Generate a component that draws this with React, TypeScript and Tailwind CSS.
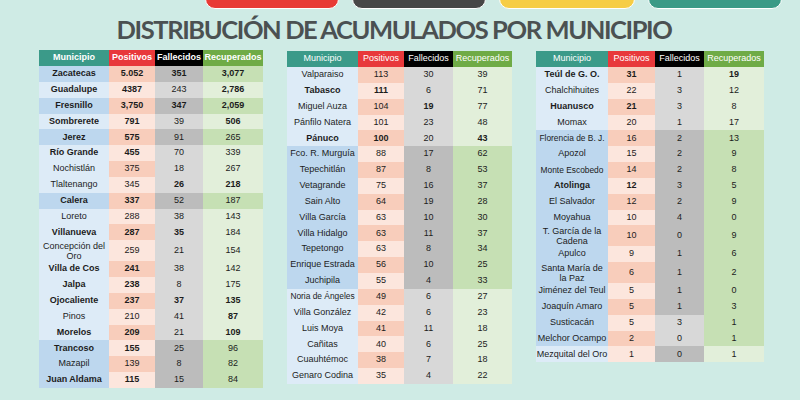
type Row = [string, string, string, string, string, string, number?];
// bold mask (municipio, positivos, fallecidos, recuperados), dark mask (municipio, fallecidos, recuperados)
// last value: 1 = two lines, 2 = smaller text

const tabla1: Row[] = [
  ['Zacatecas', '5.052', '351', '3,077', '1111', '111'],
  ['Guadalupe', '4387', '243', '2,786', '1101', '000'],
  ['Fresnillo', '3,750', '347', '2,059', '1111', '111'],
  ['Sombrerete', '791', '39', '506', '1101', '000'],
  ['Jerez', '575', '91', '265', '1100', '111'],
  ['Río Grande', '455', '70', '339', '1100', '000'],
  ['Nochistlán', '375', '18', '267', '0000', '000'],
  ['Tlaltenango', '345', '26', '218', '0011', '000'],
  ['Calera', '337', '52', '187', '1100', '111'],
  ['Loreto', '288', '38', '143', '0000', '000'],
  ['Villanueva', '287', '35', '184', '1110', '000'],
  ['Concepción del Oro', '259', '21', '154', '0000', '000', 1],
  ['Villa de Cos', '241', '38', '142', '1100', '000'],
  ['Jalpa', '238', '8', '175', '1100', '000'],
  ['Ojocaliente', '237', '37', '135', '1111', '000'],
  ['Pinos', '210', '41', '87', '0001', '000'],
  ['Morelos', '209', '21', '109', '1101', '000'],
  ['Trancoso', '155', '25', '96', '1100', '111'],
  ['Mazapil', '139', '8', '82', '0000', '111'],
  ['Juan Aldama', '115', '15', '84', '1100', '111'],
];

const tabla2: Row[] = [
  ['Valparaiso', '113', '30', '39', '0000', '000'],
  ['Tabasco', '111', '6', '71', '1100', '000'],
  ['Miguel Auza', '104', '19', '77', '0010', '000'],
  ['Pánfilo Natera', '101', '23', '48', '0000', '000'],
  ['Pánuco', '100', '20', '43', '1101', '000'],
  ['Fco. R. Murguía', '88', '17', '62', '0000', '111'],
  ['Tepechitlán', '87', '8', '53', '0000', '111'],
  ['Vetagrande', '75', '16', '37', '0000', '111'],
  ['Sain Alto', '64', '19', '28', '0000', '111'],
  ['Villa García', '63', '10', '30', '0000', '111'],
  ['Villa Hidalgo', '63', '11', '37', '0000', '111'],
  ['Tepetongo', '63', '8', '34', '0000', '111'],
  ['Enrique Estrada', '56', '10', '25', '0000', '111'],
  ['Juchipila', '55', '4', '33', '0000', '111'],
  ['Noria de Ángeles', '49', '6', '27', '0000', '000', 2],
  ['Villa González', '42', '6', '23', '0000', '000'],
  ['Luis Moya', '41', '11', '18', '0000', '000'],
  ['Cañitas', '40', '6', '25', '0000', '000'],
  ['Cuauhtémoc', '38', '7', '18', '0000', '000'],
  ['Genaro Codina', '35', '4', '22', '0000', '000'],
];

const tabla3: Row[] = [
  ['Teúl de G. O.', '31', '1', '19', '1101', '000'],
  ['Chalchihuites', '22', '3', '12', '0000', '000'],
  ['Huanusco', '21', '3', '8', '1100', '000'],
  ['Momax', '20', '1', '17', '0000', '000'],
  ['Florencia de B. J.', '16', '2', '13', '0000', '111', 2],
  ['Apozol', '15', '2', '9', '0000', '111'],
  ['Monte Escobedo', '14', '2', '8', '0000', '111', 2],
  ['Atolinga', '12', '3', '5', '1100', '111'],
  ['El Salvador', '12', '2', '9', '0000', '111'],
  ['Moyahua', '10', '4', '0', '0000', '111'],
  ['T. García de la Cadena', '10', '0', '9', '0000', '111', 1],
  ['Apulco', '9', '1', '6', '0000', '111'],
  ['Santa María de la Paz', '6', '1', '2', '0000', '111', 1],
  ['Jiménez del Teul', '5', '1', '0', '0000', '111'],
  ['Joaquín Amaro', '5', '1', '3', '0000', '111'],
  ['Susticacán', '5', '3', '1', '0000', '101'],
  ['Melchor Ocampo', '2', '0', '1', '0000', '101'],
  ['Mezquital del Oro', '1', '0', '1', '0000', '010'],
];

function Tabla({ rows, cols, boldHeader, className }: { rows: Row[]; cols: string; boldHeader?: boolean; className?: string }) {
  const head = 'h-[16px] flex items-center justify-center text-white text-[9px] whitespace-nowrap ' + (boldHeader ? 'font-bold' : '');
  return (
    <div className={'grid ' + cols + ' ' + (className ?? '')}>
      <div className={head + ' bg-[#3b9a89]'}>Municipio</div>
      <div className={head + ' bg-[#e8383b]'}>Positivos</div>
      <div className={head + ' bg-black'}>Fallecidos</div>
      <div className={head + ' bg-[#6fab46]'}>Recuperados</div>
      {rows.map(([m, p, f, r, b, d, extra], i) => {
        const h = extra === 1 ? 'h-[20.85px]' : 'h-[15.85px]';
        const cell = h + ' flex items-center justify-center text-center text-[#1c1c1c] ';
        const w = (k: number) => (b[k] === '1' ? 'font-bold ' : '');
        return [
          <div
            key={i + 'm'}
            className={cell + w(0) + (extra === 1 ? 'leading-[10px] px-[2px] ' : '') + (extra === 2 ? 'text-[8.4px] ' : 'text-[9px] ') + (d[0] === '1' ? 'bg-[#bdd7ee]' : 'bg-[#ddebf7]')}
          >
            {m}
          </div>,
          <div key={i + 'p'} className={cell + w(1) + 'text-[9px] ' + (i % 2 === 0 ? 'bg-[#f8cdbb]' : 'bg-[#fce6dd]')}>
            {p}
          </div>,
          <div key={i + 'f'} className={cell + w(2) + 'text-[9px] ' + (d[1] === '1' ? 'bg-[#bcbcbc]' : 'bg-[#d8d8d8]')}>
            {f}
          </div>,
          <div key={i + 'r'} className={cell + w(3) + 'text-[9px] ' + (d[2] === '1' ? 'bg-[#c6e0b4]' : 'bg-[#e2efda]')}>
            {r}
          </div>,
        ];
      })}
    </div>
  );
}

export default function App() {
  return (
    <div className="w-[800px] h-[400px] overflow-hidden bg-[#cfebe5] font-['Liberation_Sans',Arial,sans-serif]">
      {/* Botones superiores (cortados) */}
      <div className="flex gap-[13px] pl-[205px] -mt-[22px]">
        <div className="w-[134px] h-[31px] rounded-[10px] border-[1.5px] border-white bg-[#e83a35]" />
        <div className="w-[134px] h-[31px] rounded-[10px] border-[1.5px] border-white bg-[#474747]" />
        <div className="w-[136px] h-[31px] rounded-[10px] border-[1.5px] border-white bg-[#f6cd45]" />
        <div className="w-[134px] h-[31px] rounded-[10px] border-[1.5px] border-white bg-[#3a9a86]" />
      </div>

      <h1 className="mt-[7px] h-[26px] pr-[12px] text-center text-[25.5px] leading-[26px] tracking-[-1.4px] font-bold text-[#4b5152] font-['Lato','Open_Sans',sans-serif] whitespace-nowrap">
        DISTRIBUCIÓN DE ACUMULADOS POR MUNICIPIO
      </h1>

      <div className="flex items-start gap-[24px] pl-[39px] mt-[8px]">
        <Tabla rows={tabla1} cols="grid-cols-[70px_46px_48px_60px]" boldHeader />
        <Tabla rows={tabla2} cols="grid-cols-[71px_46px_49px_59px]" className="mt-[1px]" />
        <Tabla rows={tabla3} cols="grid-cols-[72px_47px_49px_60px]" className="mt-[1px]" />
      </div>
    </div>
  );
}
